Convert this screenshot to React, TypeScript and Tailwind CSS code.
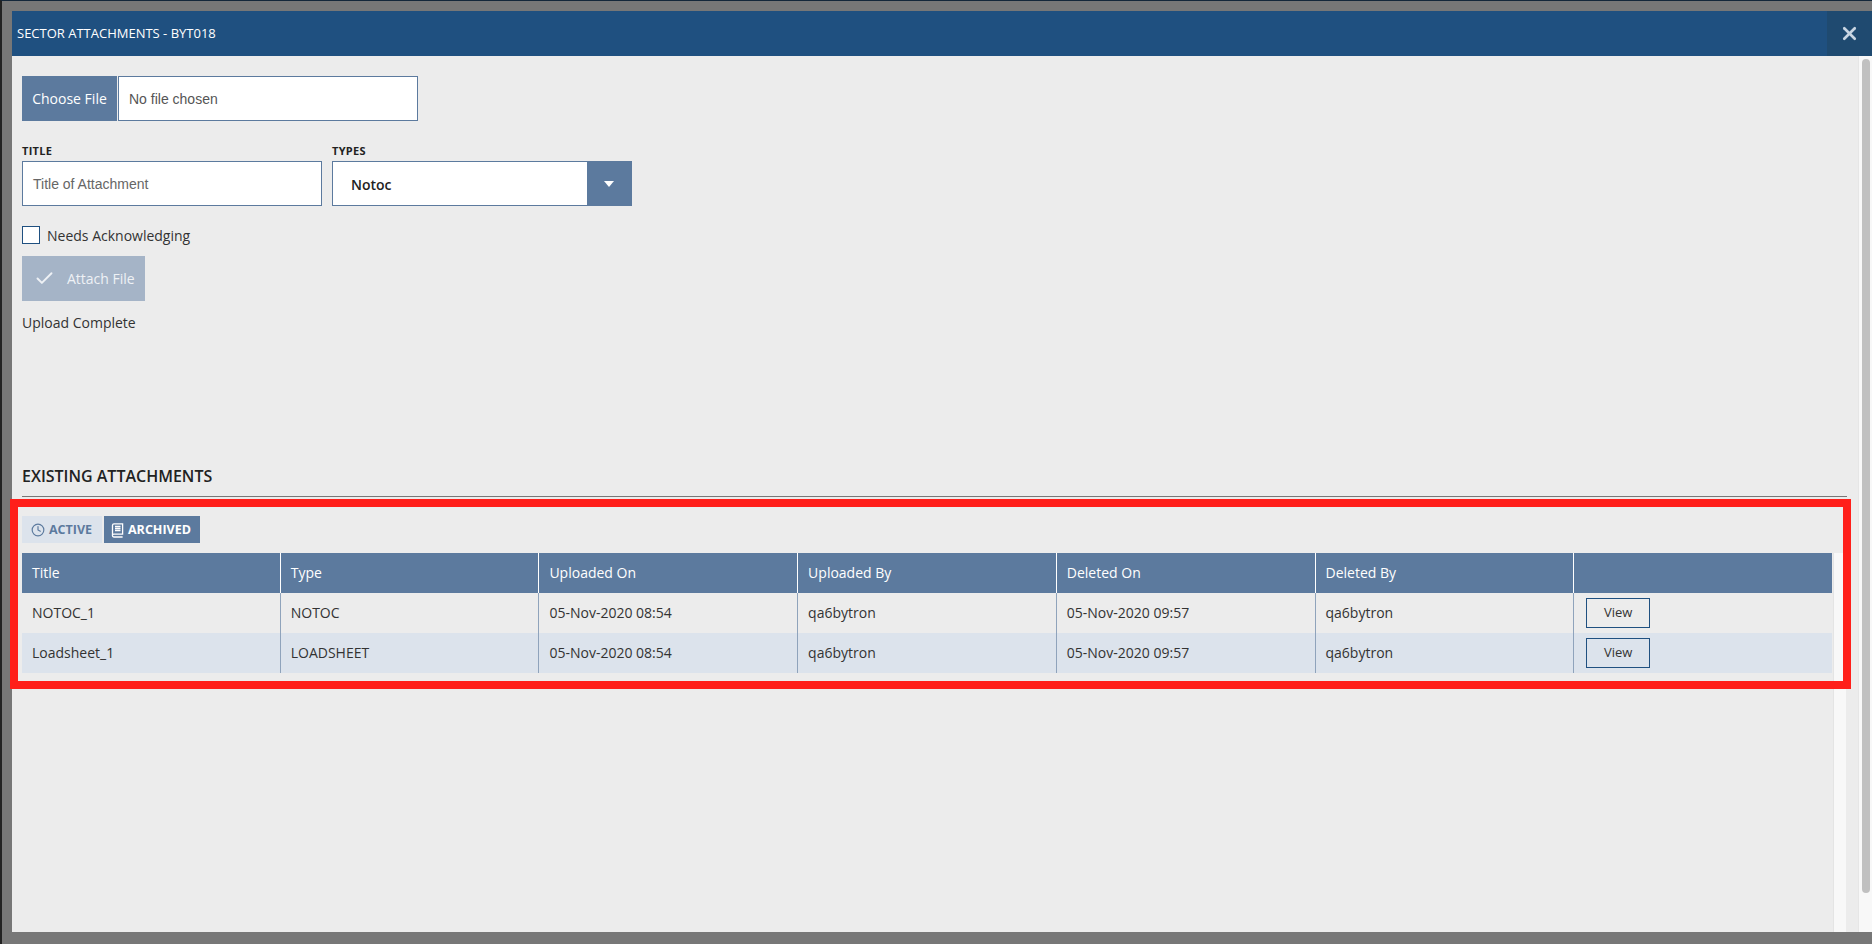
import React from 'react';
import { Check, Clock, X } from 'lucide-react';

type Row = {
  title: string;
  type: string;
  uploadedOn: string;
  uploadedBy: string;
  deletedOn: string;
  deletedBy: string;
};

const rows: Row[] = [
  { title: 'NOTOC_1', type: 'NOTOC', uploadedOn: '05-Nov-2020 08:54', uploadedBy: 'qa6bytron', deletedOn: '05-Nov-2020 09:57', deletedBy: 'qa6bytron' },
  { title: 'Loadsheet_1', type: 'LOADSHEET', uploadedOn: '05-Nov-2020 08:54', uploadedBy: 'qa6bytron', deletedOn: '05-Nov-2020 09:57', deletedBy: 'qa6bytron' },
];

const headers = ['Title', 'Type', 'Uploaded On', 'Uploaded By', 'Deleted On', 'Deleted By', ''];

function BookIcon() {
  return (
    <svg width="13" height="15" viewBox="0 0 13 15" fill="none" stroke="currentColor" strokeWidth="1.3">
      <path d="M1.5 12.2V2.2A1.5 1.5 0 0 1 3 .8h8.6v10.4H2.8a1.3 1.3 0 0 0 0 2.8h8.8" />
      <path d="M4 3.5h5.5M4 5.5h5.5M4 7.5h5.5" />
    </svg>
  );
}

export default function App() {
  return (
    <div className="flex h-screen w-full flex-col overflow-hidden border-t border-l-2 border-t-[#14273a] border-l-[#222222] bg-[#777777] pt-[10px] pb-[12px] pl-[10px] font-['Open_Sans',sans-serif] text-[#333333]">
      <div className="relative flex min-h-0 flex-1 flex-col bg-[#ececec]">
        <div className="flex h-[45px] shrink-0 items-center justify-between bg-[#1f5080] pl-[5px] text-white">
          <span className="text-[13px]">SECTOR ATTACHMENTS - BYT018</span>
          <button className="flex h-[45px] w-[45px] items-center justify-center bg-[#1f4a70] text-[#c8d5e2]">
            <X size={21} strokeWidth={3} />
          </button>
        </div>

        <div className="flex min-h-0 flex-1">
          <div className="flex min-w-0 flex-1 flex-col pt-5 pl-[10px]">
            <div className="flex h-[45px] shrink-0">
              <button className="w-[95px] bg-[#5c7a9e] text-center text-[14px] text-white">Choose File</button>
              <div className="ml-px flex w-[300px] items-center border border-[#5c7a9e] bg-white pt-0.5 pl-[10px] font-['Liberation_Sans',sans-serif] text-[14px] text-[#555555]">
                No file chosen
              </div>
            </div>

            <div className="mt-6 flex shrink-0 gap-[10px]">
              <div className="w-[300px]">
                <div className="h-4 text-[11px] leading-[12px] font-bold tracking-[0.3px] text-[#222222]">TITLE</div>
                <div className="flex h-[45px] items-center border border-[#5c7a9e] bg-white pt-0.5 pl-[10px] font-['Liberation_Sans',sans-serif] text-[14px] text-[#666666]">
                  Title of Attachment
                </div>
              </div>
              <div className="w-[300px]">
                <div className="h-4 text-[11px] leading-[12px] font-bold tracking-[0.3px] text-[#222222]">TYPES</div>
                <div className="flex h-[45px] items-center justify-between border border-[#5c7a9e] bg-white pl-[18px]">
                  <span className="pt-0.5 text-[14px] font-semibold text-[#222222]">Notoc</span>
                  <span className="flex h-full w-[44px] items-center justify-center bg-[#5c7a9e] text-white">
                    <svg width="10" height="6" viewBox="0 0 10 6" fill="currentColor"><path d="M0 0h10L5 6z" /></svg>
                  </span>
                </div>
              </div>
            </div>

            <label className="mt-5 flex h-[18px] shrink-0 items-center gap-[7px] text-[14px]">
              <span className="h-[18px] w-[18px] border border-[#1f5080] bg-white" />
              Needs Acknowledging
            </label>

            <button className="mt-3 flex h-[45px] w-[123px] shrink-0 items-center bg-[#a5b4c7] pl-[12px] text-[14px] text-[#eef1f5]">
              <Check size={21} strokeWidth={2.2} />
              <span className="ml-[12px]">Attach File</span>
            </button>

            <div className="mt-3 h-5 shrink-0 text-[14px] leading-5">Upload Complete</div>

            <div className="mt-[133px] mr-[11px] h-[31px] shrink-0 border-b border-[#777777] text-[16px] leading-5 font-semibold text-[#222222]">
              EXISTING ATTACHMENTS
            </div>

            <div className="mt-[19px] flex h-[27px] shrink-0 gap-0.5 text-[12.5px] font-bold">
              <button className="flex w-20 items-center gap-[4px] bg-[#dce3ec] pt-px pl-[9px] text-[#5c7a9e]">
                <Clock size={14} strokeWidth={2} className="-mt-px" />
                ACTIVE
              </button>
              <button className="flex w-24 items-center gap-[4px] bg-[#5c7a9e] pt-px pl-[7px] text-white">
                <BookIcon />
                ARCHIVED
              </button>
            </div>

            <div className="mt-[10px] flex min-h-0 flex-1">
              <div className="w-[1810px] shrink-0 overflow-hidden">
                <table className="w-[1811px] table-fixed border-separate border-spacing-0 text-left text-[14px]">
                  <thead>
                    <tr className="h-10 bg-[#5c7a9e] text-white">
                      {headers.map((h, i) => (
                        <th key={i} className={`pb-0.5 pl-[10px] font-medium ${i < 6 ? 'border-r border-white' : ''}`}>{h}</th>
                      ))}
                    </tr>
                  </thead>
                  <tbody className="text-[14px] text-[#333333]">
                    {rows.map((row, i) => (
                      <tr key={row.title} className={`h-10 ${i === 1 ? 'bg-[#dce3ec]' : 'bg-[#ececec]'}`}>
                        <td className="border-r border-[#8fa3bb] pb-0.5 pl-[10px]">{row.title}</td>
                        <td className="border-r border-[#8fa3bb] pb-0.5 pl-[10px]">{row.type}</td>
                        <td className="border-r border-[#8fa3bb] pb-0.5 pl-[10px]">{row.uploadedOn}</td>
                        <td className="border-r border-[#8fa3bb] pb-0.5 pl-[10px]">{row.uploadedBy}</td>
                        <td className="border-r border-[#8fa3bb] pb-0.5 pl-[10px]">{row.deletedOn}</td>
                        <td className="border-r border-[#8fa3bb] pb-0.5 pl-[10px]">{row.deletedBy}</td>
                        <td className="pl-[12px]">
                          <button className="h-[30px] w-16 border border-[#1f5080] text-[13px]">View</button>
                        </td>
                      </tr>
                    ))}
                  </tbody>
                </table>
              </div>
              <div className="ml-px w-[13px] shrink-0 border-l border-[#e4e4e4] bg-[#f8f8f8]" />
            </div>
          </div>

          <div className="flex w-[14px] shrink-0 justify-center border-l border-[#e6e6e6] bg-[#f8f8f8] pt-[3px]">
            <div className="h-[834px] w-2 rounded-full bg-[#c0c0c0]" />
          </div>
        </div>

        {/* review highlight drawn over the table */}
        <div className="pointer-events-none absolute top-[488px] left-[-2px] h-[190px] w-[1841px] border-[8px] border-[#ff1f1a]" />
      </div>
    </div>
  );
}
